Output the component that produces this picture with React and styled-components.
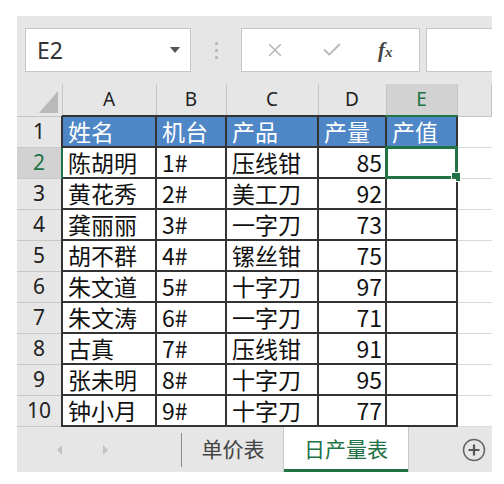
import React from 'react';
import styled, { createGlobalStyle } from 'styled-components';
import { X, Check } from 'lucide-react';

const GlobalStyle = createGlobalStyle`
  body {
    margin: 0;
    background: #ffffff;
    font-family: 'Noto Sans CJK SC', 'Noto Sans', sans-serif;
  }
`;

const Sheet = styled.div`
  margin: 16px 0 0 17px;
  width: 475px;
  background: #e6e6e6;
  overflow: hidden;
`;

const FormulaBar = styled.div`
  height: 68px;
  display: flex;
  align-items: center;
  padding-left: 8px;
  gap: 6px;
  & > * {
    flex: none;
  }
`;

const NameBox = styled.div`
  width: 166px;
  height: 44px;
  box-sizing: border-box;
  background: #fff;
  border: 1px solid #c6c6c6;
  display: flex;
  align-items: center;
  justify-content: space-between;
  padding: 0 10px 0 11px;
  font-family: 'Noto Sans', sans-serif;
  font-size: 23px;
  color: #333;
`;

const DropArrow = styled.span`
  width: 0;
  height: 0;
  border-left: 5px solid transparent;
  border-right: 5px solid transparent;
  border-top: 6px solid #555;
`;

const Dots = styled.div`
  width: 38px;
  display: flex;
  flex-direction: column;
  align-items: center;
  gap: 4px;
  span {
    width: 3px;
    height: 3px;
    border-radius: 50%;
    background: #b0b0b0;
  }
`;

const IconBox = styled.div`
  width: 179px;
  height: 44px;
  box-sizing: border-box;
  background: #fff;
  border: 1px solid #c6c6c6;
  display: flex;
  align-items: center;
  padding-left: 22px;
  gap: 35px;
`;

const Fx = styled.i`
  font-family: 'Liberation Serif', serif;
  font-weight: bold;
  font-size: 21px;
  color: #444;
  sub {
    font-size: 15px;
    vertical-align: 0;
  }
`;

const InputBox = styled.div`
  width: 100px;
  height: 44px;
  box-sizing: border-box;
  background: #fff;
  border: 1px solid #c6c6c6;
`;

const Grid = styled.table`
  width: 475px;
  table-layout: fixed;
  border-collapse: collapse;
  font-size: 23px;
  line-height: 1;
`;

const ColHead = styled.th`
  height: 31px;
  padding: 0;
  font-weight: normal;
  font-family: 'Noto Sans', sans-serif;
  font-size: 19px;
  text-align: center;
  vertical-align: middle;
  color: ${p => (p.$active ? '#217346' : '#222')};
  background: ${p => (p.$active ? '#d2d2d2' : '#e6e6e6')};
  border-right: 1px solid #c4c4c4;
  border-bottom: ${p => (p.$active ? '2px solid #217346' : '1px solid #c4c4c4')};
`;

const Corner = styled.th`
  position: relative;
  padding: 0;
  background: #e6e6e6;
  border-right: 1px solid #c4c4c4;
  border-bottom: 1px solid #c4c4c4;
  &::after {
    content: '';
    position: absolute;
    right: 4px;
    bottom: 3px;
    width: 0;
    height: 0;
    border-left: 19px solid transparent;
    border-bottom: 22px solid #b9b9b9;
  }
`;

const RowHead = styled.th`
  height: 30px;
  padding: 0;
  font-weight: normal;
  font-family: 'Noto Sans', sans-serif;
  font-size: 21px;
  text-align: center;
  vertical-align: middle;
  color: ${p => (p.$active ? '#217346' : '#222')};
  background: ${p => (p.$active ? '#d2d2d2' : '#e6e6e6')};
  border-right: ${p => (p.$active ? '2px solid #217346' : '1px solid #c4c4c4')};
  border-bottom: 1px solid #c8c8c8;
`;

const Cell = styled.td`
  position: relative;
  padding: 0 ${p => (p.$num ? '3px' : '4px')} 0 5px;
  white-space: nowrap;
  overflow: visible;
  text-align: ${p => (p.$num ? 'right' : 'left')};
  vertical-align: middle;
  color: ${p => (p.$head ? '#fff' : '#111')};
  background: ${p => (p.$head ? '#4f86c6' : '#fff')};
  border: 2px solid #333;
`;

const Blank = styled.td`
  background: #fff;
  border-bottom: 1px solid #d8d8d8;
`;

const Selection = styled.div`
  position: absolute;
  inset: -2px;
  border: 3px solid #217346;
  pointer-events: none;
  &::after {
    content: '';
    position: absolute;
    right: -6px;
    bottom: -6px;
    width: 8px;
    height: 8px;
    background: #217346;
    border: 1px solid #fff;
  }
`;

const TabBar = styled.div`
  height: 45px;
  display: flex;
  align-items: stretch;
  background: #e6e6e6;
`;

const Nav = styled.div`
  width: 164px;
  display: flex;
  align-items: center;
  padding-left: 40px;
  gap: 41px;
  box-sizing: border-box;
`;

const Arrow = styled.span`
  width: 0;
  height: 0;
  border-top: 5px solid transparent;
  border-bottom: 5px solid transparent;
  ${p => (p.$left ? 'border-right: 5px solid #c2c2c2;' : 'border-left: 5px solid #c2c2c2;')}
`;

const Divider = styled.div`
  width: 1px;
  margin: 6px 0 5px;
  background: #8a8a8a;
`;

const Tab = styled.div`
  display: flex;
  align-items: center;
  justify-content: center;
  box-sizing: border-box;
  font-size: 21px;
  width: ${p => (p.$active ? '124px' : '102px')};
  color: ${p => (p.$active ? '#217346' : '#444')};
  background: ${p => (p.$active ? '#fff' : 'transparent')};
  border-bottom: ${p => (p.$active ? '3px solid #217346' : 'none')};
  padding-bottom: ${p => (p.$active ? '0' : '3px')};
  box-shadow: ${p => (p.$active ? '1px 0 0 #c8c8c8, -1px 0 0 #c8c8c8' : 'none')};
`;

const AddSheet = styled.div`
  margin-left: auto;
  width: 30px;
  display: flex;
  align-items: center;
  justify-content: flex-start;
`;

const cols = ['A', 'B', 'C', 'D', 'E'];
const widths = [45, 94, 70, 92, 68, 71];

const rows = [
  ['陈胡明', '1#', '压线钳', 85],
  ['黄花秀', '2#', '美工刀', 92],
  ['龚丽丽', '3#', '一字刀', 73],
  ['胡不群', '4#', '镙丝钳', 75],
  ['朱文道', '5#', '十字刀', 97],
  ['朱文涛', '6#', '一字刀', 71],
  ['古真', '7#', '压线钳', 91],
  ['张未明', '8#', '十字刀', 95],
  ['钟小月', '9#', '十字刀', 77],
];

export default function App() {
  return (
    <>
      <GlobalStyle />
      <Sheet>
        <FormulaBar>
          <NameBox>
            E2
            <DropArrow />
          </NameBox>
          <Dots>
            <span />
            <span />
            <span />
          </Dots>
          <IconBox>
            <X size={22} color="#b4b4b4" strokeWidth={1.6} />
            <Check size={22} color="#b8b8b8" strokeWidth={2} />
            <Fx>
              f<sub>x</sub>
            </Fx>
          </IconBox>
          <InputBox />
        </FormulaBar>

        <Grid>
          <colgroup>
            {widths.map((w, i) => (
              <col key={i} style={{ width: w }} />
            ))}
            <col />
          </colgroup>
          <thead>
            <tr>
              <Corner />
              {cols.map(c => (
                <ColHead key={c} $active={c === 'E'}>
                  {c}
                </ColHead>
              ))}
              <ColHead />
            </tr>
          </thead>
          <tbody>
            <tr>
              <RowHead>1</RowHead>
              <Cell $head>姓名</Cell>
              <Cell $head>机台</Cell>
              <Cell $head>产品</Cell>
              <Cell $head>产量</Cell>
              <Cell $head>产值</Cell>
              <Blank />
            </tr>
            {rows.map((r, i) => (
              <tr key={i}>
                <RowHead $active={i === 0}>{i + 2}</RowHead>
                <Cell>{r[0]}</Cell>
                <Cell>{r[1]}</Cell>
                <Cell>{r[2]}</Cell>
                <Cell $num>{r[3]}</Cell>
                <Cell>{i === 0 && <Selection />}</Cell>
                <Blank />
              </tr>
            ))}
          </tbody>
        </Grid>

        <TabBar>
          <Nav>
            <Arrow $left />
            <Arrow />
          </Nav>
          <Divider />
          <Tab>单价表</Tab>
          <Tab $active>日产量表</Tab>
          <AddSheet>
            <svg width="24" height="24" viewBox="0 0 24 24">
              <circle cx="12" cy="12" r="10.5" fill="none" stroke="#666" strokeWidth="1.5" />
              <path d="M12 6.5v11M6.5 12h11" stroke="#555" strokeWidth="2.2" />
            </svg>
          </AddSheet>
        </TabBar>
      </Sheet>
    </>
  );
}
